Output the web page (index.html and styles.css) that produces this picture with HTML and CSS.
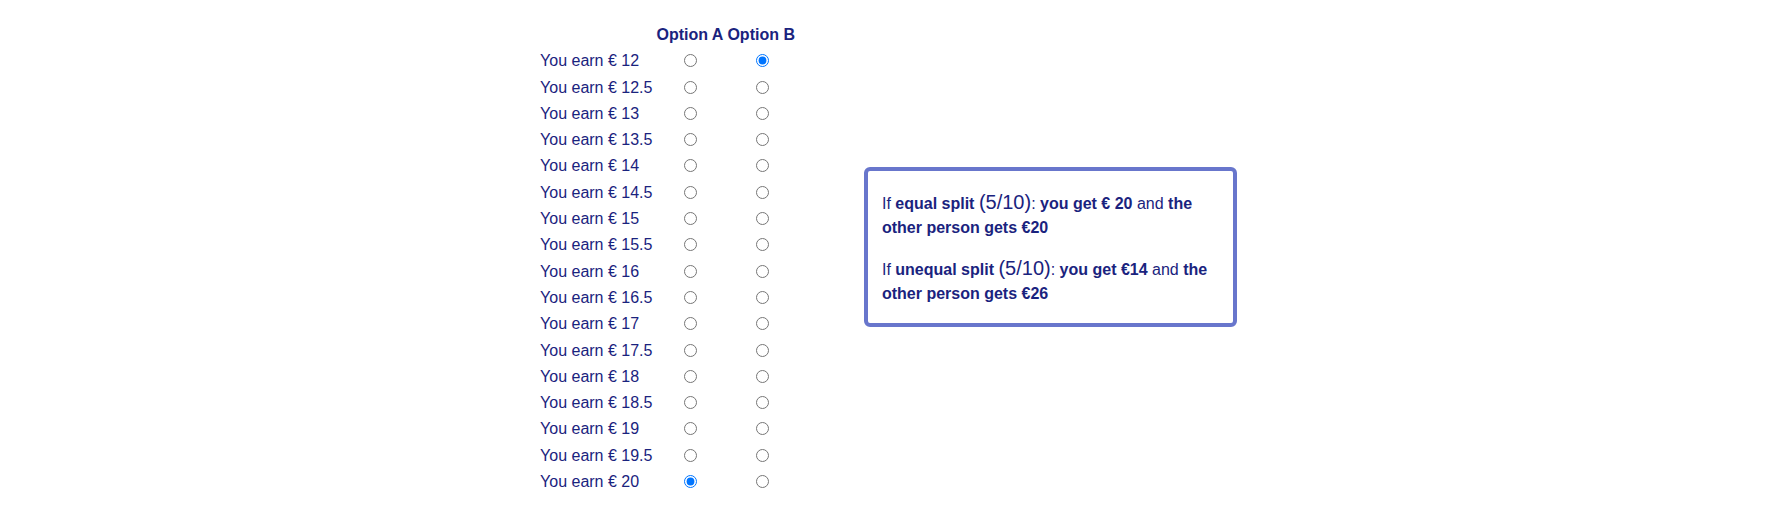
FILE: index.html
```html
<!DOCTYPE html>
<html>
<head>
<meta charset="utf-8">
<link rel="stylesheet" href="styles.css">
</head>
<body>
<div class="page">
  <table class="choices">
    <thead>
      <tr><th></th><th>Option A</th><th>Option B</th></tr>
    </thead>
    <tbody>
      <tr><td class="label">You earn € 12</td><td class="opt"><input type="radio" name="r1"></td><td class="opt"><input type="radio" name="r1" checked></td></tr>
      <tr><td class="label">You earn € 12.5</td><td class="opt"><input type="radio" name="r2"></td><td class="opt"><input type="radio" name="r2"></td></tr>
      <tr><td class="label">You earn € 13</td><td class="opt"><input type="radio" name="r3"></td><td class="opt"><input type="radio" name="r3"></td></tr>
      <tr><td class="label">You earn € 13.5</td><td class="opt"><input type="radio" name="r4"></td><td class="opt"><input type="radio" name="r4"></td></tr>
      <tr><td class="label">You earn € 14</td><td class="opt"><input type="radio" name="r5"></td><td class="opt"><input type="radio" name="r5"></td></tr>
      <tr><td class="label">You earn € 14.5</td><td class="opt"><input type="radio" name="r6"></td><td class="opt"><input type="radio" name="r6"></td></tr>
      <tr><td class="label">You earn € 15</td><td class="opt"><input type="radio" name="r7"></td><td class="opt"><input type="radio" name="r7"></td></tr>
      <tr><td class="label">You earn € 15.5</td><td class="opt"><input type="radio" name="r8"></td><td class="opt"><input type="radio" name="r8"></td></tr>
      <tr><td class="label">You earn € 16</td><td class="opt"><input type="radio" name="r9"></td><td class="opt"><input type="radio" name="r9"></td></tr>
      <tr><td class="label">You earn € 16.5</td><td class="opt"><input type="radio" name="r10"></td><td class="opt"><input type="radio" name="r10"></td></tr>
      <tr><td class="label">You earn € 17</td><td class="opt"><input type="radio" name="r11"></td><td class="opt"><input type="radio" name="r11"></td></tr>
      <tr><td class="label">You earn € 17.5</td><td class="opt"><input type="radio" name="r12"></td><td class="opt"><input type="radio" name="r12"></td></tr>
      <tr><td class="label">You earn € 18</td><td class="opt"><input type="radio" name="r13"></td><td class="opt"><input type="radio" name="r13"></td></tr>
      <tr><td class="label">You earn € 18.5</td><td class="opt"><input type="radio" name="r14"></td><td class="opt"><input type="radio" name="r14"></td></tr>
      <tr><td class="label">You earn € 19</td><td class="opt"><input type="radio" name="r15"></td><td class="opt"><input type="radio" name="r15"></td></tr>
      <tr><td class="label">You earn € 19.5</td><td class="opt"><input type="radio" name="r16"></td><td class="opt"><input type="radio" name="r16"></td></tr>
      <tr><td class="label">You earn € 20</td><td class="opt"><input type="radio" name="r17" checked></td><td class="opt"><input type="radio" name="r17"></td></tr>
    </tbody>
  </table>
  <div class="info">
    <p>If <b>equal split</b> <span class="big">(5/10)</span>: <b>you get € 20</b> and <b>the other person gets €20</b></p>
    <p>If <b>unequal split</b> <span class="big">(5/10)</span>: <b>you get €14</b> and <b>the other person gets €26</b></p>
  </div>
</div>
</body>
</html>
```
FILE: styles.css
```css
html, body {
  margin: 0;
  padding: 0;
  background: #ffffff;
}

body {
  font-family: "Liberation Sans", Arial, sans-serif;
  color: #1a237e;
  font-size: 16px;
}

.page {
  display: flex;
  justify-content: center;
  align-items: flex-start;
  gap: 66px;
  padding: 21px 9px 0 0;
}

.choices {
  border-collapse: separate;
  border-spacing: 2px;
  font-size: 16px;
  line-height: 22.3px;
}

.choices th,
.choices td {
  padding: 1px;
}

.choices th {
  font-weight: bold;
  text-align: center;
}

.choices td.label {
  text-align: left;
  white-space: nowrap;
}

.choices td.opt {
  text-align: center;
}

.choices input[type="radio"] {
  margin: 3px 3px 0 5px;
  vertical-align: -1px;
}

.info {
  margin-top: 146px;
  width: 338px;
  padding: 3px 13px 0 14px;
  border: 4px solid #6876cc;
  border-radius: 6px;
  line-height: 24px;
}

.info p {
  margin: 18px 0;
}

.info p:last-child {
  margin-bottom: 17px;
}

.big {
  font-size: 20px;
  line-height: 20px;
}
```
